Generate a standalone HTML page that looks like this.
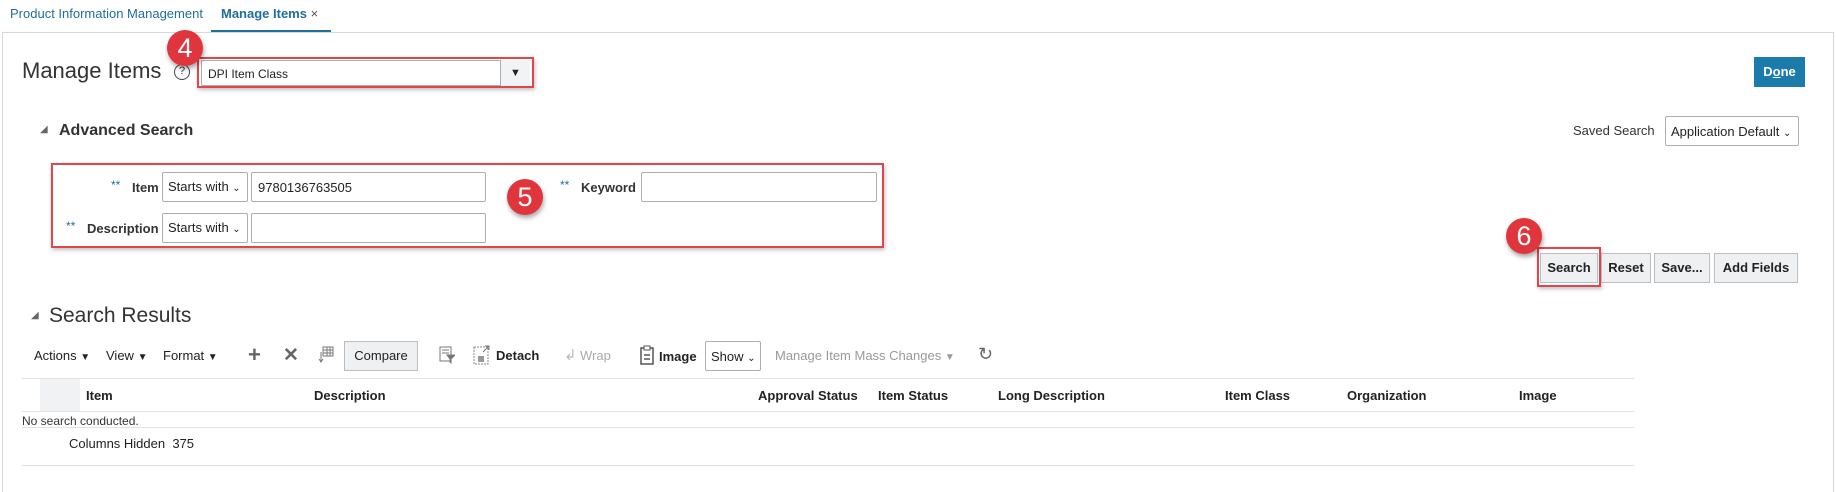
<!DOCTYPE html>
<html><head><meta charset="utf-8"><style>
*{box-sizing:border-box;margin:0;padding:0}
body{width:1836px;height:492px;background:#fff;font-family:"Liberation Sans",Arial,sans-serif;color:#333;position:relative;overflow:hidden;font-size:13px}
.a{position:absolute;white-space:nowrap}
.inp{position:absolute;border:1px solid #a9afb5;background:#fff;border-radius:2px}
.sel{position:absolute;border:1px solid #a9afb5;background:#fff;border-radius:2px;font-size:13px;padding:6px 0 0 5px;color:#222}
.btn{position:absolute;border:1px solid #b8bec4;background:#eef0f2;font-weight:bold;font-size:13px;text-align:center;line-height:28px;color:#222}
.badge{position:absolute;width:36px;height:36px;border-radius:50%;background:#e1353d;color:#fff;font-size:27px;text-align:center;line-height:36px;box-shadow:1px 3px 5px rgba(0,0,0,.35)}
.red{position:absolute;border:2px solid #e0464c;box-shadow:1px 2px 4px rgba(0,0,0,.25)}
.th{position:absolute;top:388px;font-weight:bold;font-size:13px;color:#222}
.chev{font-size:10px}
</style></head><body>
<div class="a" style="left:10px;top:6px;color:#1f6e9b;font-size:13px">Product Information Management</div>
<div class="a" style="left:221px;top:6px;color:#1f6e9b;font-size:13px;font-weight:bold">Manage Items <span style="color:#555;font-weight:normal">×</span></div>
<div class="a" style="left:211px;top:30px;width:120px;height:3px;background:#1f6e9b"></div>
<div class="a" style="left:2px;top:32px;width:1832px;height:1px;background:#d6d9dc"></div>
<div class="a" style="left:2px;top:32px;width:1px;height:460px;background:#d6d9dc"></div>
<div class="a" style="left:1833px;top:32px;width:1px;height:460px;background:#d6d9dc"></div>

<div class="a" style="left:22px;top:58px;font-size:22px;color:#333">Manage Items</div>
<div class="a" style="left:174px;top:64px;width:16px;height:16px;border:1.5px solid #444;border-radius:50%;font-size:11px;text-align:center;line-height:13px;color:#333">?</div>
<div class="red" style="left:197px;top:57px;width:337px;height:31px"></div>
<div class="inp" style="left:201px;top:60px;width:329px;height:26px;font-size:12px;padding:6px 0 0 6px;color:#222">DPI Item Class</div>
<div class="a" style="left:500px;top:60px;width:30px;height:26px;border-left:1px solid #a9afb5;background:#f2f3f4;text-align:center;font-size:11px;line-height:26px;color:#222">▼</div>
<div class="badge" style="left:167px;top:30px">4</div>

<div class="a" style="left:1754px;top:57px;width:51px;height:30px;background:#1b7cab;color:#fff;font-weight:bold;font-size:13px;text-align:center;line-height:30px">D<u>o</u>ne</div>

<div class="a" style="left:40px;top:124px;font-size:10px;color:#666">◢</div>
<div class="a" style="left:59px;top:122px;font-size:16px;font-weight:bold;color:#333">Advanced Search</div>

<div class="a" style="left:1573px;top:123px;font-size:13px;color:#333">Saved Search</div>
<div class="sel" style="left:1665px;top:116px;width:134px;height:30px;padding-top:7px">Application Default <span class="chev">⌄</span></div>

<div class="red" style="left:51px;top:163px;width:833px;height:85px"></div>
<div class="a" style="left:111px;top:178px;color:#1f6e9b;font-size:12px">**</div>
<div class="a" style="left:132px;top:180px;font-weight:bold;font-size:13px">Item</div>
<div class="sel" style="left:162px;top:172px;width:86px;height:30px">Starts with <span class="chev">⌄</span></div>
<div class="inp" style="left:251px;top:172px;width:235px;height:30px;padding:7px 0 0 6px;font-size:13px;color:#222">9780136763505</div>
<div class="a" style="left:66px;top:219px;color:#1f6e9b;font-size:12px">**</div>
<div class="a" style="left:87px;top:221px;font-weight:bold;font-size:13px">Description</div>
<div class="sel" style="left:162px;top:213px;width:86px;height:30px">Starts with <span class="chev">⌄</span></div>
<div class="inp" style="left:251px;top:213px;width:235px;height:30px"></div>
<div class="a" style="left:560px;top:178px;color:#1f6e9b;font-size:12px">**</div>
<div class="a" style="left:581px;top:180px;font-weight:bold;font-size:13px">Keyword</div>
<div class="inp" style="left:641px;top:172px;width:236px;height:30px"></div>
<div class="badge" style="left:507px;top:179px">5</div>

<div class="red" style="left:1537px;top:247px;width:64px;height:40px"></div>
<div class="btn" style="left:1540px;top:253px;width:58px;height:30px">Search</div>
<div class="btn" style="left:1601px;top:253px;width:50px;height:30px">Reset</div>
<div class="btn" style="left:1654px;top:253px;width:56px;height:30px">Save...</div>
<div class="btn" style="left:1714px;top:253px;width:84px;height:30px">Add Fields</div>
<div class="badge" style="left:1506px;top:218px">6</div>

<div class="a" style="left:31px;top:310px;font-size:10px;color:#666">◢</div>
<div class="a" style="left:49px;top:304px;font-size:21px;color:#333">Search Results</div>

<div class="a" style="left:34px;top:348px;font-size:13px;color:#222">Actions <span style="font-size:10px">▼</span></div>
<div class="a" style="left:106px;top:348px;font-size:13px;color:#222">View <span style="font-size:10px">▼</span></div>
<div class="a" style="left:163px;top:348px;font-size:13px;color:#222">Format <span style="font-size:10px">▼</span></div>
<div class="a" style="left:248px;top:342px;font-size:22px;font-weight:bold;color:#666">+</div>
<div class="a" style="left:283px;top:344px;font-size:19px;font-weight:bold;color:#666">✕</div>
<svg class="a" style="left:318px;top:346px" width="16" height="18"><rect x="5" y="1" width="10" height="9" fill="none" stroke="#777"/><path d="M5 4H15M5 7H15M9 1V10M12 1V10M3 6V15M1 13L3 16L5 13" stroke="#777" fill="none"/></svg>
<div class="btn" style="left:344px;top:341px;width:74px;height:30px;font-weight:normal;background:#eef0f2;color:#222">Compare</div>
<svg class="a" style="left:439px;top:346px" width="16" height="18"><rect x="1" y="1" width="11" height="14" fill="none" stroke="#777"/><path d="M3 4H10M3 7H10M8 9H16L12 13V17L11 16V13Z" stroke="#777" fill="#777"/></svg>
<svg class="a" style="left:473px;top:345px" width="18" height="20"><rect x="1" y="2" width="14" height="17" fill="none" stroke="#888" stroke-dasharray="2 1"/><path d="M10 7L16 1M12 1H16V5" stroke="#777" fill="none"/><rect x="5" y="11" width="6" height="6" fill="#999"/></svg>
<div class="a" style="left:496px;top:348px;font-size:13px;font-weight:bold;color:#222">Detach</div>
<div class="a" style="left:564px;top:346px;font-size:15px;color:#bbb">↲</div>
<div class="a" style="left:580px;top:348px;font-size:13px;color:#aaa">Wrap</div>
<svg class="a" style="left:640px;top:345px" width="14" height="20"><rect x="1" y="3" width="12" height="16" fill="none" stroke="#555" stroke-width="1.5"/><rect x="4" y="1" width="6" height="4" fill="#fff" stroke="#555"/><path d="M4 10H10M4 14H10" stroke="#555" stroke-width="1.5"/></svg>
<div class="a" style="left:659px;top:349px;font-size:13px;font-weight:bold;color:#222">Image</div>
<div class="sel" style="left:705px;top:341px;width:56px;height:30px;padding-top:7px">Show <span class="chev">⌄</span></div>
<div class="a" style="left:775px;top:348px;font-size:13px;color:#999">Manage Item Mass Changes <span style="font-size:10px">▼</span></div>
<div class="a" style="left:978px;top:344px;font-size:18px;color:#666">↻</div>

<div class="a" style="left:22px;top:378px;width:1612px;height:1px;background:#e0e2e4"></div>
<div class="a" style="left:40px;top:379px;width:40px;height:33px;background:#f1f2f4"></div>
<div class="a" style="left:22px;top:411px;width:1612px;height:1px;background:#e0e2e4"></div>
<div class="th" style="left:86px">Item</div>
<div class="th" style="left:314px">Description</div>
<div class="th" style="left:758px">Approval Status</div>
<div class="th" style="left:878px">Item Status</div>
<div class="th" style="left:998px">Long Description</div>
<div class="th" style="left:1225px">Item Class</div>
<div class="th" style="left:1347px">Organization</div>
<div class="th" style="left:1519px">Image</div>
<div class="a" style="left:22px;top:414px;font-size:12px;color:#333">No search conducted.</div>
<div class="a" style="left:22px;top:427px;width:1612px;height:1px;background:#e0e2e4"></div>
<div class="a" style="left:69px;top:436px;font-size:13px;color:#222">Columns Hidden&nbsp; 375</div>
<div class="a" style="left:22px;top:465px;width:1612px;height:1px;background:#e0e2e4"></div>
</body></html>
